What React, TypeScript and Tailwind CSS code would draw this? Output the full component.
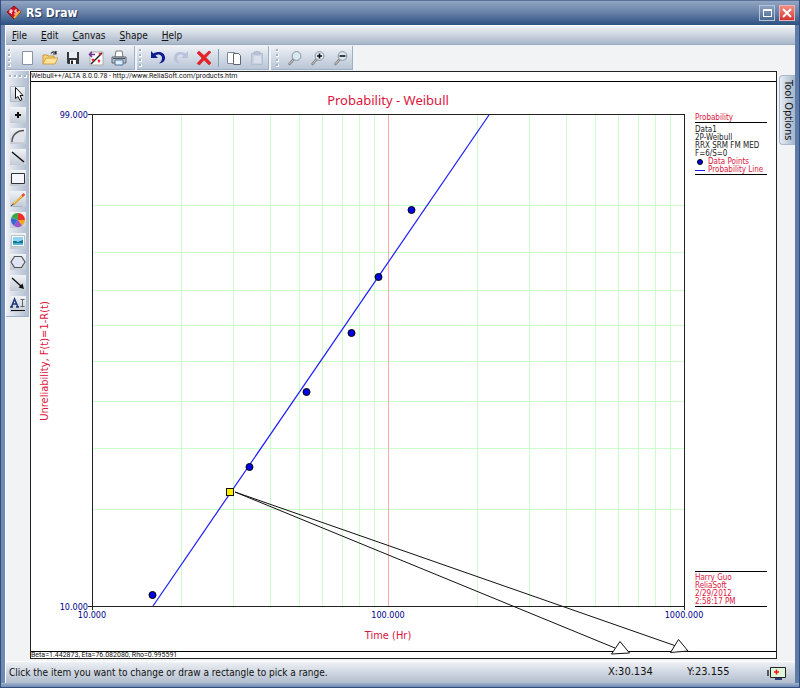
import type { ReactNode } from "react";

const LEFT = 92;
const DECADE = 296;
const gridX = [0, 1].flatMap((d) =>
  [2, 3, 4, 5, 6, 7, 8, 9].map((n) => Math.round(LEFT + DECADE * (d + Math.log10(n)))),
);
const gridY = [205, 252, 290, 325, 361, 401, 448, 509];
const points = [
  [152, 595],
  [249, 467],
  [306, 392],
  [351, 333],
  [378, 277],
  [411, 210],
];

function Icon({ children }: { children: ReactNode }) {
  return (
    <svg viewBox="0 0 16 16" className="block size-4" aria-hidden="true">
      {children}
    </svg>
  );
}

function Dots() {
  return (
    <>
      {[0, 1, 2, 3].map((i) => (
        <span key={i} className="size-[3px] border-b border-r border-white bg-[#9fb0ca]" />
      ))}
    </>
  );
}

function Grip() {
  return (
    <span className="mr-1 flex flex-col gap-[2px] pl-[2px]" aria-hidden="true">
      <Dots />
    </span>
  );
}

const magnifier = (
  <>
    <path d="M6.500 9.500 2.500 14" stroke="#777" strokeWidth="2.4" strokeLinecap="round" />
    <path d="M6.500 9.500 2.500 14" stroke="#d8d4c8" strokeWidth="1" strokeLinecap="round" />
    <circle cx="9.5" cy="6" r="4.4" fill="#d9e9f3" stroke="#8a9299" />
  </>
);

const fileTools: [string, ReactNode][] = [
  ["New", <path d="M3.500 1.500h10v13h-10z" fill="#fff" stroke="#8993a8" />],
  [
    "Open",
    <>
      <path d="M1 14V5h4l1 1h6v3" fill="#f7d47c" stroke="#c9993a" />
      <path d="M1 14 4 8h12l-3 6z" fill="#ffe39a" stroke="#d3a03a" />
      <path d="M9 3.500c2-2.500 4-2 5 0m0-2.500v3h-3" fill="none" stroke="#222" strokeWidth="1.2" />
    </>,
  ],
  [
    "Save",
    <>
      <path d="M2 2h12v12H3l-1-1z" fill="#34383d" />
      <path d="M4 2h8v6H4z" fill="#e8edf2" />
      <path d="M5 10h6v4H5z" fill="#fff" />
      <path d="M6 10.500h2V14H6z" fill="#222" />
    </>,
  ],
  [
    "Export graphic",
    <>
      <path d="M2 2h13v13H2z" fill="#fff" stroke="#aaa" />
      <path d="M3 14 14 3" stroke="#222" strokeWidth="1.500" />
      <path d="m4 9 2 2m0-2-2 2m7-8 2 2m0-2-2 2m-1 5 2 2m0-2-2 2" stroke="#e3222b" strokeWidth="1.500" />
      <path d="M7 4.500H2m2-2.500L1.500 4.500 4 7" fill="none" stroke="#73308e" strokeWidth="1.500" />
    </>,
  ],
  [
    "Print",
    <>
      <path d="M5 1h6l1 6H4z" fill="#fff" stroke="#777" />
      <path d="M1 7h14v6H1z" fill="#b4bdc8" stroke="#5e6874" />
      <path d="M4 10h8v5H4z" fill="#d8edfd" stroke="#53749b" />
      <path d="M2 8.500h12" stroke="#4e5862" />
    </>,
  ],
];

const editTools: [string, ReactNode][] = [
  [
    "Undo",
    <path
      d="M1 1v7h7L5.500 5.500C8 3.500 12 4.500 12 8c0 2-1 4-3 5.500 4-.5 6.500-3 6-6.500C14.500 2 8 .5 3.500 3.500z"
      fill="#0d1c91"
    />,
  ],
  [
    "Redo",
    <path
      d="M15 1v7H8l2.500-2.500C8 3.500 4 4.500 4 8c0 2 1 4 3 5.500C3 13 .5 10.500 1 7 1.500 2 8 .5 12.500 3.500z"
      fill="#b9c1dc"
    />,
  ],
  [
    "Delete",
    <path
      d="m1 3 2-2 5 4.500L13 1l2 1-5 5.500 5 5.500-2 2-5-5-4.500 5L1 13.500 6 8z"
      fill="#ee2024"
      stroke="#b71921"
      strokeWidth=".5"
    />,
  ],
];

const copyTools: [string, ReactNode][] = [
  [
    "Copy",
    <>
      <path d="M1.500 2.500h7v11h-7z" fill="#fff" stroke="#7f8794" />
      <path d="M7.500 3.500h5l2 2v9h-7z" fill="#fff" stroke="#60656c" />
    </>,
  ],
  [
    "Paste",
    <>
      <path d="M2.500 3.500h11v11h-11z" fill="#c8d0df" stroke="#b3bdd0" />
      <path d="M5 4V2h2l1-1 1 1h2v2z" fill="#c1cadb" stroke="#a9b4ca" />
      <path d="M5 6h7v7H5z" fill="#d9dfeb" />
    </>,
  ],
];

const zoomTools: [string, ReactNode][] = [
  ["Zoom", magnifier],
  [
    "Zoom in",
    <>
      {magnifier}
      <path d="M7 6h5M9.500 3.500v5" stroke="#111" strokeWidth="1.600" />
    </>,
  ],
  [
    "Zoom out",
    <>
      {magnifier}
      <path d="M6.500 6h6" stroke="#111" strokeWidth="1.600" />
    </>,
  ],
];

const drawTools: [string, ReactNode][] = [
  [
    "Select",
    <>
      <path d="M.5 15.500V.5h15v15z" fill="none" stroke="#b3bcc9" />
      <path d="M5.500 1.500v11l2.500-2 2 4 2-1-2-4h3z" fill="#fff" stroke="#111" />
    </>,
  ],
  ["Add point", <path d="M8 5v6M5 8h6" stroke="#111" strokeWidth="2" />],
  [
    "Arc",
    <>
      <path d="M2 14C2 7 7 2.500 14 2.500V14z" fill="#e0e4ea" />
      <path d="M2 14C2 7 7 2.500 14 2.500" fill="none" stroke="#555" strokeWidth="1.4" />
    </>,
  ],
  ["Line", <path d="m2 3 12 10" stroke="#111" strokeWidth="1.500" />],
  ["Rectangle", <path d="M1.500 3.500h13v10h-13z" fill="#f3f6ff" stroke="#333" />],
  [
    "Pencil",
    <>
      <path d="m3 13.500 10-9" stroke="#e09a28" strokeWidth="2.200" />
      <path d="m3.500 12.500 9.500-8.500" stroke="#ffd676" />
      <path d="m12 5 2.500-2" stroke="#e55045" strokeWidth="2.400" />
      <path d="m1 15 2.500-2" stroke="#333" />
      <path d="M3 15.500h9" stroke="#aab3c0" />
    </>,
  ],
  [
    "Pie",
    <>
      <path d="M8 8V1a7 7 0 0 0-6.700 5z" fill="#3aa84a" />
      <path d="M8 8V1a7 7 0 0 1 7 7z" fill="#f32d28" />
      <path d="M8 8h7a7 7 0 0 1-3 5.700z" fill="#f6a51f" />
      <path d="m8 8 4 5.700a7 7 0 0 1-8.500-.3z" fill="#9a55c8" />
      <path d="m8 8-4.500 5.400A7 7 0 0 1 1.300 6z" fill="#3668d2" />
    </>,
  ],
  [
    "Picture",
    <>
      <path d="M1.500 2.500h13v11h-13z" fill="#fff" stroke="#b9c1c9" />
      <path d="M3 4h10v8H3z" fill="#8fd3f2" />
      <path d="M3 8h3l2 1 2-1 3-1v3H3z" fill="#14758b" />
      <path d="M3 10h10v2H3z" fill="#4fb0dc" />
    </>,
  ],
  ["Polygon", <path d="m4.500 2.500h7L15 8l-3.500 5.500h-7L1 8z" fill="#dfe5f5" stroke="#555" strokeWidth="1.200" />],
  [
    "Arrow",
    <>
      <path d="m2 3 10 9" stroke="#111" strokeWidth="1.4" />
      <path d="M14 14 8.500 12.500l4-4z" fill="#111" />
    </>,
  ],
  [
    "Text",
    <>
      <path d="m1.500 11 3-8L8 11M2.500 8h4M0 11h3m3 0h3" fill="none" stroke="#1e3478" strokeWidth="1.500" />
      <path d="M10.500 3.500h4m-2 0v7m-2 0h4" stroke="#666" />
      <path d="M1 14.500h14" stroke="#111" />
    </>,
  ],
];

function ToolButtons({ tools }: { tools: [string, ReactNode][] }) {
  return (
    <>
      {tools.map(([label, art]) => (
        <button key={label} type="button" aria-label={label} title={label} className="flex w-[23px] justify-center">
          <Icon>{art}</Icon>
        </button>
      ))}
    </>
  );
}

const groupStyle =
  "flex h-6 items-center border-b border-r border-[#9fafc8] bg-linear-to-b from-[#eef1f6] to-[#b9c5d6]";

function Plot() {
  return (
    <svg
      viewBox="31 82 660 569"
      className="relative z-10 block min-w-0 flex-1 overflow-visible"
      role="img"
      aria-label="Probability - Weibull plot"
    >
      <g stroke="#ccffcc" shapeRendering="crispEdges">
        {gridX.map((x) => (
          <path key={x} d={`M${x + 0.5} 115V606`} />
        ))}
        {gridY.map((y) => (
          <path key={y} d={`M92 ${y + 0.5}H684`} />
        ))}
        <path d="M388.500 115V606" stroke="#ffaaaa" />
      </g>
      <path d="M153 606 489 115" stroke="#1a1aff" strokeWidth="1.200" />
      <g fill="none" stroke="#222" shapeRendering="crispEdges">
        <path d="M88 114.500H684.500V610M88 606.500H684.500M92.500 114V610" />
      </g>
      {points.map(([x, y]) => (
        <circle key={x} cx={x + 0.5} cy={y} r="3.500" fill="#0000e8" stroke="#000" />
      ))}
      <g stroke="#111" fill="#fff">
        <path d="M235 492 676 646M235 492 615 648" fill="none" />
        <path d="m620 641.500 9.500 11.500-18 1z" />
        <path d="m678.500 639.500 9.500 11.500-17.500 1.500z" />
        <path d="M226.500 488.500h7v7h-7z" fill="#ffee00" shapeRendering="crispEdges" />
      </g>
      <g fill="#dc143c" textAnchor="middle">
        <text x="388" y="105" className="font-['Noto_Sans',sans-serif] text-[13px]">
          Probability - Weibull
        </text>
        <text x="388" y="639" className="text-[11px]">
          Time (Hr)
        </text>
        <text transform="translate(48 361) rotate(-90)" className="text-[11px]">
          Unreliability, F(t)=1-R(t)
        </text>
      </g>
      <g fill="#00008b" className="text-[9px]">
        <text x="88" y="118" textAnchor="end">
          99.000
        </text>
        <text x="88" y="610" textAnchor="end">
          10.000
        </text>
        <g textAnchor="middle">
          <text x="92" y="618">
            10.000
          </text>
          <text x="388" y="618">
            100.000
          </text>
          <text x="684" y="618">
            1000.000
          </text>
        </g>
      </g>
    </svg>
  );
}

function Legend() {
  return (
    <aside className="flex w-[85px] flex-col justify-between pb-11 pl-1 pr-[9px] pt-8 text-[8px] leading-[8px] whitespace-nowrap">
      <div className="text-[#222]">
        <h2 className="border-b border-black text-[#dc143c]">Probability</h2>
        <div className="pt-[3px]">
          <p>Data1</p>
          <p>2P-Weibull</p>
          <p>RRX SRM FM MED</p>
          <p>F=6/S=0</p>
        </div>
        <ul className="border-b border-black text-[#dc143c]">
          <li className="flex items-center">
            <span className="ml-[2px] mr-[5px] size-[6px] rounded-full border border-black bg-[#0000e8]" />
            Data Points
          </li>
          <li className="flex items-start">
            <span className="mt-1 mr-[3px] h-px w-[10px] shrink-0 bg-[#1a1aff]" />
            Probability Line
          </li>
        </ul>
      </div>
      <div className="border-y border-black pt-[2px] text-[#dc143c]">
        <p>Harry Guo</p>
        <p>ReliaSoft</p>
        <p>2/29/2012</p>
        <p>2:58:17 PM</p>
      </div>
    </aside>
  );
}

export default function App() {
  return (
    <div className="flex min-h-screen flex-col border-x border-[#314f7e] bg-linear-to-r from-[#6e89b2] via-[#a1b3cd] to-[#5f7ba7] font-['DejaVu_Sans_Condensed','Noto_Sans',sans-serif] text-[11px] text-[#111]">
      <header className="flex h-[25px] items-center justify-between border-t border-[#5a7198] bg-linear-to-b from-[#92a5c4] via-[#6680a7] to-[#2d5081] pl-[5px] pr-1">
        <h1 className="flex items-center gap-1 text-[12px] font-bold text-white [text-shadow:1px_1px_1px_#1d365d]">
          <Icon>
            <path d="m8 1 7 6-7 7-7-7z" fill="#cf1723" stroke="#8d1018" />
            <path d="M4 8V5h2v2H4l2 2m5-4H9v2h2v2H8" fill="none" stroke="#fff" />
            <path d="m8 13 6-7" stroke="#efb13c" strokeWidth="2" />
          </Icon>
          RS Draw
        </h1>
        <div className="flex gap-1">
          <button
            type="button"
            aria-label="Maximize"
            className="flex size-4 items-center justify-center border border-[#b5c4da] bg-linear-to-b from-[#8da2c2] to-[#49698f]"
          >
            <span className="h-2 w-[9px] border border-t-2 border-white" />
          </button>
          <button
            type="button"
            aria-label="Close"
            className="flex size-4 items-center justify-center border border-[#e6b4b4] bg-linear-to-b from-[#f38c82] to-[#d52e32]"
          >
            <svg viewBox="0 0 10 10" className="size-[10px]" aria-hidden="true">
              <path d="m1 1 8 8m0-8L1 9" stroke="#fff" strokeWidth="2" />
            </svg>
          </button>
        </div>
      </header>

      <div className="mx-1 flex flex-1 flex-col border-l border-white bg-[#f2f3f5]">
        <nav
          aria-label="Main menu"
          className="flex h-5 items-center gap-[14px] border-b border-t border-white border-b-[#9aabc3] bg-linear-to-b from-[#eff2f5] to-[#a9b7c9] pl-[6px] text-[10px]"
        >
          {["File", "Edit", "Canvas", "Shape", "Help"].map((item) => (
            <button key={item} type="button">
              <span className="underline">{item[0]}</span>
              {item.slice(1)}
            </button>
          ))}
        </nav>

        <div className="flex items-start gap-[2px] py-px">
          <div role="toolbar" aria-label="File" className={`${groupStyle} pr-1`}>
            <Grip />
            <ToolButtons tools={fileTools} />
          </div>
          <div role="toolbar" aria-label="Edit" className={groupStyle}>
            <Grip />
            <ToolButtons tools={editTools} />
            <span className="mx-[3px] h-[18px] border-l border-[#8799b5]" />
            <ToolButtons tools={copyTools} />
          </div>
          <div role="toolbar" aria-label="Zoom" className={`${groupStyle} pl-[3px]`}>
            <Grip />
            <ToolButtons tools={zoomTools} />
          </div>
        </div>

        <main className="flex flex-1 items-start">
          <div
            role="toolbar"
            aria-label="Drawing tools"
            className="mr-px flex w-[23px] flex-col items-center gap-[5px] border-b border-[#9fafc8] bg-linear-to-r from-[#eef1f6] to-[#adbbce] pb-1"
          >
            <span className="mt-1 flex gap-[2px] pb-[3px]" aria-hidden="true">
              <Dots />
            </span>
            {drawTools.map(([label, art]) => (
              <button
                key={label}
                type="button"
                aria-label={label}
                title={label}
                className="bg-linear-to-b from-[#f1f3f6] to-[#c2cad5]"
              >
                <Icon>{art}</Icon>
              </button>
            ))}
          </div>

          <section aria-label="Canvas" className="min-w-0 flex-1 border border-[#222] bg-white">
            <p className="h-[10px] border-b border-black font-[Roboto,sans-serif] text-[7px] leading-[9px]">
              Weibull++/ALTA 8.0.0.78 - http://www.ReliaSoft.com/products.htm
            </p>
            <div className="flex">
              <Plot />
              <Legend />
            </div>
            <p className="h-[7px] border-t border-black font-[Roboto,sans-serif] text-[7px] leading-[6px]">
              Beta=1.442873, Eta=76.082080, Rho=0.995591
            </p>
          </section>

          <button
            type="button"
            className="mt-1 ml-[2px] h-[70px] w-4 rounded-l border border-r-0 border-[#a9b8cf] bg-linear-to-r from-[#e7ecf3] to-[#a5b5cb] leading-[14px] [writing-mode:vertical-rl]"
          >
            Tool Options
          </button>
        </main>

        <footer className="mt-[2px] flex h-[22px] items-center border-t border-white bg-linear-to-b from-[#eef1f5] to-[#b1bdcd] pl-[3px] pr-[8px]">
          <span className="flex-1 text-[10px]">
            Click the item you want to change or draw a rectangle to pick a range.
          </span>
          <span className="w-[79px]">X:30.134</span>
          <span className="w-[80px]">Y:23.155</span>
          <svg viewBox="0 0 20 14" className="h-[14px] w-5" aria-hidden="true">
            <path d="M1 4v6" stroke="#555" strokeWidth="2" />
            <path d="M3.500 1.500h15v10h-15z" fill="#dcf7d9" stroke="#222" />
            <path d="M8 13h7" stroke="#303b79" strokeWidth="2" />
            <path d="M9.500 3.500v5M7 6h5" stroke="#f11" strokeWidth="1.500" />
          </svg>
        </footer>
      </div>
      <div className="h-[5px] border-b border-[#314f7e] bg-linear-to-b from-[#a1b3cd] to-[#6e89b2]" />
    </div>
  );
}
